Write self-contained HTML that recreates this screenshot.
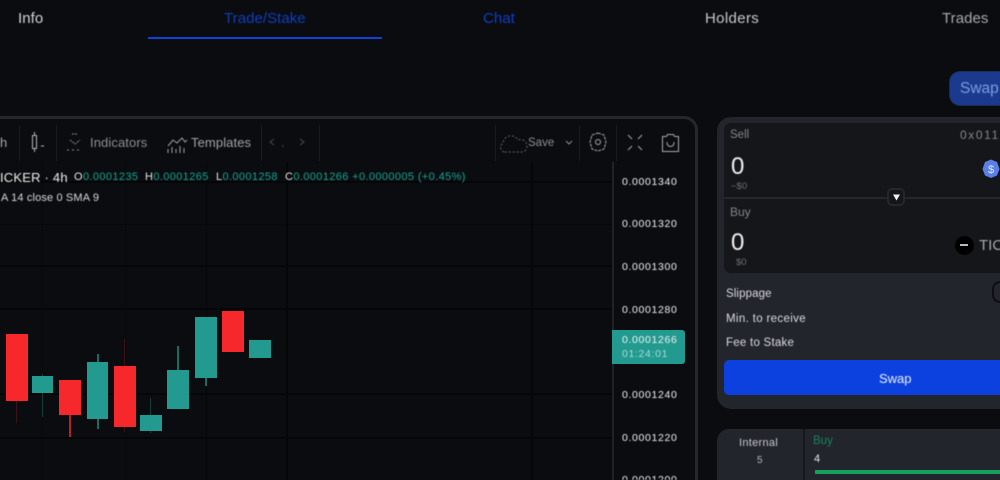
<!DOCTYPE html>
<html>
<head>
<meta charset="utf-8">
<style>
html,body{margin:0;padding:0;background:#0b0c0f;overflow:hidden;}
#p{position:relative;width:1000px;height:480px;overflow:hidden;background:#0b0c0f;font-family:"Liberation Sans",sans-serif;color:#d8d9dc;}
#p div{position:absolute;white-space:nowrap;}
.t{filter:blur(.5px);}
.r{background:#f7282c;}
.g{background:#229a8f;}
.px{font-size:10.5px;color:#f0f1f2;left:622px;line-height:12px;letter-spacing:.65px;}
.gl{background:#050608;}
.sep{background:#191b20;width:1px;}
.w{width:1px;}
.tab{top:10px;font-size:15px;line-height:18px;letter-spacing:.05px;}
.lg{top:171px;font-size:11px;color:#e6e7e9;letter-spacing:.38px;line-height:13px;}
</style>
</head>
<body>
<div id="p">
<div class="t tab" style="left:18px;color:#d4d5d8;">Info</div>
<div class="t tab" style="left:224px;color:#0f3fc0;">Trade/Stake</div>
<div style="left:148px;top:37px;width:234px;height:2px;background:#0e41d6;"></div>
<div class="t tab" style="left:483px;color:#0f3fc8;">Chat</div>
<div class="t tab" style="left:705px;color:#c8c9cc;letter-spacing:.35px;">Holders</div>
<div class="t tab" style="left:942px;color:#a9aaad;">Trades</div>

<!-- swap pill -->
<div style="left:949px;top:71px;width:51px;height:35px;box-sizing:border-box;background:#1b3a8e;border:1px solid #1e2d55;border-right:none;border-radius:11px 0 0 11px;"></div>
<div class="t" style="left:960px;top:80px;font-size:15.5px;line-height:18px;color:#7f9be0;">Swap</div>

<!-- chart panel -->
<div style="left:0;top:116px;width:698px;height:364px;box-sizing:border-box;border:3px solid #24272e;border-left:none;border-bottom:none;border-radius:0 14px 0 0;background:#0b0c0f;"></div>

<!-- toolbar -->
<div class="sep" style="left:19px;top:125px;height:36px;"></div>
<div class="sep" style="left:56px;top:125px;height:36px;"></div>
<div class="sep" style="left:261px;top:125px;height:36px;"></div>
<div class="sep" style="left:319px;top:125px;height:36px;"></div>
<div class="sep" style="left:495px;top:125px;height:36px;"></div>
<div class="sep" style="left:579px;top:125px;height:36px;"></div>
<div class="sep" style="left:616px;top:125px;height:36px;"></div>
<div class="t" style="left:0;top:135px;font-size:13px;color:#a9aaad;">h</div>
<div class="t" style="left:90px;top:135px;font-size:13px;color:#8e8f93;letter-spacing:.1px;">Indicators</div>
<div class="t" style="left:191px;top:135px;font-size:13px;color:#a2a3a6;letter-spacing:.1px;">Templates</div>
<div class="t" style="left:528px;top:137px;font-size:11.5px;color:#8e8f93;">Save</div>

<svg style="position:absolute;left:0;top:120px;filter:blur(.4px)" width="700" height="45" fill="none" stroke="#9a9b9f" stroke-width="1">
<rect x="32.5" y="15.5" width="4" height="13" stroke="#b5b6b9"/>
<path d="M34.500 12v3M34.500 29v3M41 26h3" stroke="#b5b6b9"/>
<path d="M72 14h5M70 20l5 4 5-4M67 30h2M72 30h2M77 30h2" stroke="#8e8f93" stroke-dasharray="2 1"/>
<path d="M168 26l5-6 4 3 5-5 3 4 2-2" stroke="#a2a3a6" />
<path d="M168 29v4M172 27v6M176 29v4M180 26v7M184 28v5" stroke="#a2a3a6"/>
<path d="M274 19l-4 3 4 3M283 25v2M300 19l4 3-4 3" stroke="#4a4c50"/>
<path d="M504 32a5 5 0 0 1 -1-9a8 8 0 0 1 15-3a6 6 0 0 1 5 12z" stroke="#66686c" stroke-dasharray="2 2"/>
<path d="M566 21l3 3 3-3" stroke="#8e8f93"/>
<path d="M598 13l6 2 2 7-2 7-6 2-6-2-2-7 2-7z" stroke="#a8a9ac" stroke-dasharray="3 1"/>
<circle cx="598" cy="22" r="2.500" stroke="#a8a9ac"/>
<path d="M628 15l4 4M642 15l-4 4M628 30l4-4M642 30l-4-4" stroke="#a8a9ac"/>
<path d="M662.500 16.500h4l1-2h6l1 2h4v15h-16z" stroke="#a8a9ac"/>
<path d="M667 22v1a3.500 3.500 0 0 0 7 0v-1" stroke="#a8a9ac"/>
</svg>

<!-- grid -->
<div style="left:0;top:224px;width:612px;height:1px;background:#08090b;"></div>
<div class="gl" style="left:206px;top:162px;width:1px;height:318px;"></div>
<div class="gl" style="left:286px;top:162px;width:2px;height:318px;"></div>
<div class="gl" style="left:531px;top:162px;width:2px;height:318px;"></div>
<div style="left:42px;top:162px;width:1px;height:318px;background:#08090b;"></div>
<div style="left:125px;top:162px;width:1px;height:318px;background:#08090b;"></div>
<div class="gl" style="left:0;top:181px;width:612px;height:2px;"></div>
<div class="gl" style="left:0;top:265px;width:612px;height:2px;"></div>
<div class="gl" style="left:0;top:308px;width:612px;height:2px;"></div>
<div class="gl" style="left:0;top:393px;width:612px;height:2px;"></div>
<div class="gl" style="left:0;top:437px;width:612px;height:2px;"></div>

<!-- legend -->
<div class="t" style="left:0;top:170px;font-size:13px;line-height:15px;color:#eee;letter-spacing:.2px;">ICKER · 4h</div>
<div class="t lg" style="left:74px;">O<span style="color:#15a793">0.0001235</span></div>
<div class="t lg" style="left:145px;">H<span style="color:#15a793">0.0001265</span></div>
<div class="t lg" style="left:216px;">L<span style="color:#15a793">0.0001258</span></div>
<div class="t lg" style="left:285px;">C<span style="color:#15a793">0.0001266 +0.0000005 (+0.45%)</span></div>
<div class="t" style="left:1px;top:192px;font-size:11px;line-height:13px;color:#d8d9dc;letter-spacing:.15px;">A 14 close 0 SMA 9</div>

<!-- wicks -->
<div class="w" style="left:16px;top:401px;height:22px;background:#3a1416;"></div>
<div class="w" style="left:42px;top:374px;height:43px;background:#123f3b;"></div>
<div style="left:69px;top:415px;width:2px;height:22px;background:#b52225;"></div>
<div style="left:97px;top:354px;width:2px;height:75px;background:#176c65;"></div>
<div class="w" style="left:124px;top:339px;height:93px;background:#3a1416;"></div>
<div style="left:150px;top:398px;width:1px;height:35px;background:#123f3b;"></div>
<div style="left:177px;top:346px;width:2px;height:63px;background:#176c65;"></div>
<div style="left:205px;top:378px;width:2px;height:8px;background:#176c65;"></div>
<!-- candles -->
<div class="r" style="left:6px;top:334px;width:22px;height:67px;"></div>
<div class="g" style="left:32px;top:376px;width:21px;height:17px;"></div>
<div class="r" style="left:59px;top:380px;width:22px;height:35px;"></div>
<div class="g" style="left:87px;top:362px;width:21px;height:57px;"></div>
<div class="r" style="left:114px;top:366px;width:22px;height:61px;"></div>
<div class="g" style="left:140px;top:415px;width:22px;height:16px;"></div>
<div class="g" style="left:167px;top:370px;width:22px;height:39px;"></div>
<div class="g" style="left:195px;top:317px;width:22px;height:61px;"></div>
<div class="r" style="left:222px;top:311px;width:22px;height:41px;"></div>
<div class="g" style="left:249px;top:340px;width:22px;height:18px;"></div>

<!-- axis -->
<div style="left:612px;top:162px;width:2px;height:318px;background:#1f2227;"></div>
<div class="px t" style="top:176px;">0.0001340</div>
<div class="px t" style="top:218px;">0.0001320</div>
<div class="px t" style="top:261px;">0.0001300</div>
<div class="px t" style="top:304px;">0.0001280</div>
<div class="px t" style="top:389px;">0.0001240</div>
<div class="px t" style="top:432px;">0.0001220</div>
<div class="px t" style="top:468px;height:12px;overflow:hidden;line-height:24px;">0.0001200</div>
<div style="left:612px;top:330px;width:73px;height:34px;background:#229a8f;border-radius:0 3px 3px 0;"></div>
<div class="px t" style="top:334px;color:#f2f3f3;">0.0001266</div>
<div class="px t" style="top:348px;color:#a9dcd6;">01:24:01</div>

<!-- swap panel -->
<div style="left:717px;top:117px;width:283px;height:292px;background:#22252c;border-radius:14px 0 0 14px;"></div>
<div style="left:724px;top:123px;width:276px;height:150px;background:#15161a;border-radius:7px 0 0 7px;"></div>
<div style="left:724px;top:197px;width:276px;height:2px;background:#24272e;"></div>
<div style="left:887px;top:188px;width:18px;height:18px;box-sizing:border-box;background:#15161a;border:2px solid #24272e;border-radius:5px;"></div>
<svg style="position:absolute;left:892px;top:193px" width="9" height="9"><path d="M1 1.500h7L4.500 7.500z" fill="#f0f0f0"/></svg>

<div class="t" style="left:730px;top:128px;font-size:11.5px;line-height:14px;color:#85868a;">Sell</div>
<div class="t" style="left:960px;top:128px;font-size:12px;line-height:14px;color:#85868a;letter-spacing:1.6px;">0x011</div>
<div class="t" style="left:731px;top:153px;font-size:24px;line-height:28px;color:#f2f2f2;">0</div>
<div class="t" style="left:731px;top:181px;font-size:9.5px;color:#6e6f73;">~$0</div>
<svg style="position:absolute;left:982px;top:159px" width="18" height="20"><path d="M9 0.500l6 2.500 2.500 7-2.500 6.500-6 2.500-6-2.500-2.500-6.500 2.500-7z" fill="#5b7fe8"/><text x="9" y="14" font-size="11" fill="#dfe7fb" text-anchor="middle" font-family="Liberation Sans">$</text></svg>

<div class="t" style="left:730px;top:205px;font-size:12px;line-height:14px;color:#85868a;">Buy</div>
<div class="t" style="left:731px;top:229px;font-size:24px;line-height:28px;color:#f2f2f2;">0</div>
<div class="t" style="left:736px;top:257px;font-size:9.500px;color:#6e6f73;">$0</div>
<div style="left:955px;top:236px;width:19px;height:19px;background:#000;border-radius:50%;"></div>
<div style="left:960px;top:244px;width:8px;height:2px;background:#bbb;"></div>
<div class="t" style="left:979px;top:237px;font-size:15px;line-height:17px;color:#a8a9ac;">TIC</div>

<div class="t" style="left:726px;top:288px;font-size:11.500px;line-height:13px;color:#dcdde0;letter-spacing:.1px;">Slippage</div>
<div style="left:992px;top:281px;width:8px;height:22px;box-sizing:border-box;border:2px solid #0d0e11;border-right:none;border-radius:8px 0 0 8px;"></div>
<div class="t" style="left:726px;top:313px;font-size:11.500px;line-height:13px;color:#dcdde0;letter-spacing:.35px;">Min. to receive</div>
<div class="t" style="left:726px;top:337px;font-size:11.500px;line-height:13px;color:#dcdde0;letter-spacing:.25px;">Fee to Stake</div>

<div style="left:724px;top:360px;width:276px;height:35px;background:#0c41e0;border-radius:5px 0 0 5px;"></div>
<div class="t" style="left:879px;top:371px;font-size:13px;line-height:15px;color:#f0f3ff;">Swap</div>

<!-- stats panel -->
<div style="left:717px;top:429px;width:283px;height:51px;background:#22252c;border-radius:12px 0 0 0;"></div>
<div style="left:803px;top:429px;width:2px;height:51px;background:#15171b;"></div>
<div class="t" style="left:739px;top:437px;font-size:11px;line-height:13px;color:#c9cacd;letter-spacing:.3px;">Internal</div>
<div class="t" style="left:757px;top:455px;font-size:10px;line-height:12px;color:#b5b6b9;">5</div>
<div class="t" style="left:813px;top:435px;font-size:11.500px;line-height:13px;color:#17875c;">Buy</div>
<div class="t" style="left:814px;top:453px;font-size:11px;line-height:13px;color:#e6e7e9;">4</div>
<div style="left:815px;top:470px;width:185px;height:4px;background:#14a160;"></div>
</div>
</body>
</html>
